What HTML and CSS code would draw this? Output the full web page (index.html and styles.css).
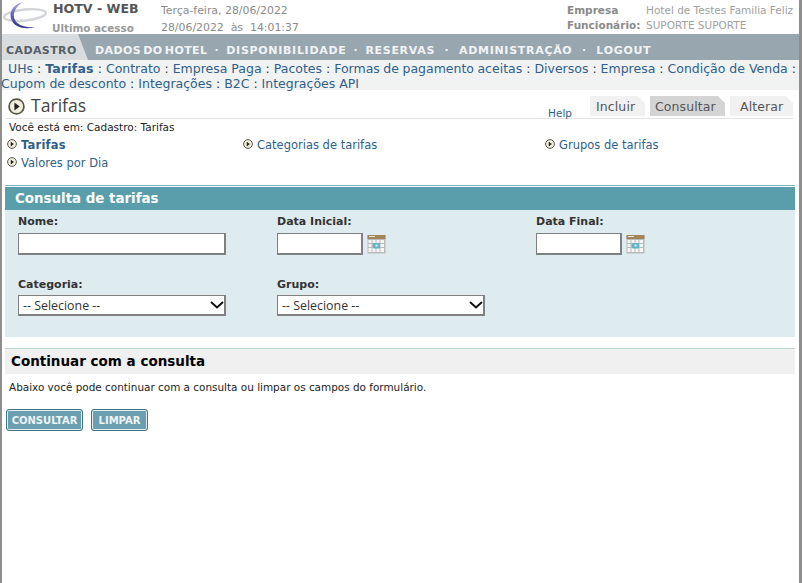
FILE: index.html
```html
<!DOCTYPE html>
<html lang="pt-BR">
<head>
<meta charset="utf-8">
<title>HOTV - WEB</title>
<link rel="stylesheet" href="styles.css">
</head>
<body>
<svg width="0" height="0" class="defs">
  <defs>
    <linearGradient id="moon" x1="0" y1="0" x2="0" y2="1">
      <stop offset="0" stop-color="#a9acd8"/>
      <stop offset=".55" stop-color="#5b5fb0"/>
      <stop offset="1" stop-color="#2f3288"/>
    </linearGradient>
    <symbol id="bullet" viewBox="0 0 16 16">
      <circle cx="8" cy="8" r="7" fill="#f2f0dc" stroke="#55554a" stroke-width="1.6"/>
      <path d="M6 4.2 11 8 6 11.8Z" fill="#222"/>
    </symbol>
    <symbol id="cal" viewBox="0 0 19 20">
      <rect x="0.5" y="1" width="18" height="18.5" fill="#b9b9b9"/>
      <rect x="0.5" y="1" width="18" height="4" fill="#a3855a"/>
      <rect x="2" y="2" width="6" height="1" fill="#efe6cf"/>
      <g fill="#f6f6f6">
        <rect x="1.5" y="6" width="3" height="3"/><rect x="5.5" y="6" width="3" height="3"/><rect x="9.5" y="6" width="3" height="3"/><rect x="13.5" y="6" width="3.5" height="3"/>
        <rect x="1.5" y="10" width="3" height="3"/><rect x="13.5" y="10" width="3.5" height="3"/>
        <rect x="1.5" y="14" width="3" height="4"/><rect x="5.5" y="14" width="3" height="4"/><rect x="9.5" y="14" width="3" height="4"/><rect x="13.5" y="14" width="3.5" height="4"/>
      </g>
      <rect x="6" y="9" width="7" height="5.5" rx="1" fill="#5fb4c8"/>
      <rect x="8.5" y="10.5" width="2" height="2" fill="#e4f3f6"/>
    </symbol>
  </defs>
</svg>
<div class="page">
  <header class="top">
    <svg class="logo" width="46" height="34" viewBox="0 0 46 34">
      <ellipse cx="23" cy="15" rx="21" ry="5.5" transform="rotate(-6 23 15)" fill="none" stroke="#d2d4d8" stroke-width="2.4"/>
      <path d="M21 2C10 5 6 13 10 21c3 6 12 9 24 6-9 1-18-1-21-7C10 14 13 7 21 2Z" fill="url(#moon)"/>
    </svg>
    <div class="top-title">
      <div class="brand">HOTV - WEB</div>
      <div class="last">Ultimo acesso</div>
    </div>
    <div class="top-date">
      <div>Terça-feira, 28/06/2022</div>
      <div>28/06/2022&nbsp; às&nbsp; 14:01:37</div>
    </div>
    <div class="top-info">
      <div class="info-row"><b>Empresa</b><span>Hotel de Testes Familia Feliz</span></div>
      <div class="info-row"><b>Funcionário:</b><span>SUPORTE SUPORTE</span></div>
    </div>
  </header>

  <nav class="nav">
    <a class="nav-active">CADASTRO</a>
    <div class="nav-items">
      <a class="nav-tight">DADOS DO HOTEL</a><i>·</i><a>DISPONIBILIDADE</a><i>·</i><a>RESERVAS</a><i class="sep-wide">·</i><a>ADMINISTRAÇÃO</a><i class="sep-wide">·</i><a>LOGOUT</a>
    </div>
  </nav>

  <div class="sub">
    <div class="sub-line first"><a>UHs</a> : <a class="on">Tarifas</a> : <a>Contrato</a> : <a>Empresa Paga</a> : <a>Pacotes</a> : <a class="tight">Formas de pagamento aceitas</a> : <a>Diversos</a> : <a>Empresa</a> : <a>Condição de Venda</a> :</div>
    <div class="sub-line second"><a>Cupom de desconto</a> : <a>Integrações</a> : <a>B2C</a> : <a>Integrações API</a></div>
  </div>

  <div class="title-row">
    <svg class="title-icon"><use href="#bullet"/></svg>
    <h1>Tarifas</h1>
    <a class="help">Help</a>
    <div class="tabs">
      <a class="tab">Incluir</a>
      <a class="tab tab-on">Consultar</a>
      <a class="tab">Alterar</a>
    </div>
  </div>

  <div class="crumb">Você está em: Cadastro: Tarifas</div>

  <div class="links">
    <a class="link on"><svg class="bullet"><use href="#bullet"/></svg>Tarifas</a>
    <a class="link"><svg class="bullet"><use href="#bullet"/></svg>Categorias de tarifas</a>
    <a class="link"><svg class="bullet"><use href="#bullet"/></svg>Grupos de tarifas</a>
    <a class="link"><svg class="bullet"><use href="#bullet"/></svg>Valores por Dia</a>
  </div>

  <section class="panel">
    <h2>Consulta de tarifas</h2>
    <div class="form">
      <div class="field">
        <label for="nome">Nome:</label>
        <input id="nome" class="txt wide" type="text">
      </div>
      <div class="field">
        <label for="di">Data Inicial:</label>
        <div class="date"><input id="di" class="txt short" type="text"><svg class="cal"><use href="#cal"/></svg></div>
      </div>
      <div class="field">
        <label for="df">Data Final:</label>
        <div class="date"><input id="df" class="txt short" type="text"><svg class="cal"><use href="#cal"/></svg></div>
      </div>
      <div class="field">
        <label for="cat">Categoria:</label>
        <div class="sel-wrap">
          <select id="cat" class="sel"><option>-- Selecione --</option></select>
          <svg class="chev" width="14" height="8" viewBox="0 0 14 8"><path d="M1 1l6 5.5L13 1" fill="none" stroke="#111" stroke-width="2"/></svg>
        </div>
      </div>
      <div class="field">
        <label for="gr">Grupo:</label>
        <div class="sel-wrap">
          <select id="gr" class="sel"><option>-- Selecione --</option></select>
          <svg class="chev" width="14" height="8" viewBox="0 0 14 8"><path d="M1 1l6 5.5L13 1" fill="none" stroke="#111" stroke-width="2"/></svg>
        </div>
      </div>
    </div>
  </section>

  <section class="cont">
    <h3>Continuar com a consulta</h3>
    <p>Abaixo você pode continuar com a consulta ou limpar os campos do formulário.</p>
    <div class="btns">
      <button class="btn btn-main" type="button">CONSULTAR</button>
      <button class="btn btn-alt" type="button">LIMPAR</button>
    </div>
  </section>
</div>
</body>
</html>
```
FILE: styles.css
```css
* { box-sizing: border-box; }
html, body { margin: 0; padding: 0; background: #fff; }
body { font-family: "DejaVu Sans", Verdana, sans-serif; font-size: 11px; color: #222; overflow: hidden; }
.defs { position: absolute; }
a { color: #2f5f8a; text-decoration: none; }

.page {
  width: 802px; height: 583px;
  border-left: 2px solid #8e8e8e;
  border-right: 3px solid #8e8e8e;
}

.top { display: flex; height: 34px; color: #8a8a8a; }
.logo { flex: none; }
.top-title { width: 109px; margin-left: 4px; }
.brand { font-weight: bold; font-size: 12.6px; color: #555; line-height: 17px; padding-left: 1px; }
.last { font-weight: bold; font-size: 10.4px; color: #999; line-height: 15px; margin-top: 4px; }
.top-date { width: 406px; font-size: 10.9px; line-height: 16px; color: #8b8b8b; padding-top: 3px; }
.top-date div + div { margin-top: 1px; }
.top-info { font-size: 10.5px; padding-top: 3px; }
.info-row { display: flex; line-height: 15px; }
.info-row b { width: 79px; color: #8a8a8a; }
.info-row span { color: #a0a0a0; white-space: nowrap; }

.nav { display: flex; height: 26px; background: #98a6b0; font-weight: bold; font-size: 11px; letter-spacing: .7px; }
.nav-active {
  width: 86px; height: 26px; padding: 10px 0 0 4px; color: #555f66;
  background: #d9dcde; line-height: 14px; letter-spacing: .4px;
  clip-path: polygon(0 0, 76px 0, 100% 100%, 0 100%);
}
.nav-items { display: flex; gap: 7px; padding: 10px 0 0 7px; line-height: 14px; }
.nav-items a { color: #f1f4f5; }
.nav-items .nav-tight { letter-spacing: .4px; word-spacing: -2px; }
.nav-items i { color: #f1f4f5; font-style: normal; }
.nav-items .sep-wide { margin: 0 2.5px; }

.sub { height: 30px; background: #f1f3f3; font-size: 12.5px; line-height: 15px; color: #333; padding-top: 1px; }
.sub-line { white-space: nowrap; }
.sub-line.first { padding-left: 6px; }
.sub-line.second { margin-left: -1px; }
.tight { word-spacing: -.5px; }
.on { font-weight: bold; color: #2f5f8a; letter-spacing: .2px; }

.title-row { display: flex; align-items: flex-end; height: 29px; margin: 0 6px 0 4px; border-bottom: 1px solid #e2e4e4; }
.title-icon { width: 17px; height: 17px; margin: 0 6px 3px 2px; flex: none; }
h1 { margin: 0; font-family: "Open Sans", sans-serif; font-weight: 400; font-size: 17.6px; line-height: 26px; color: #444; }
.help { margin: 0 0 -2px auto; font-size: 10.5px; line-height: 14px; }
.tabs { display: flex; gap: 5px; margin: 0 0 2px 18px; }
.tab {
  height: 20px; padding: 0 0 0 6px; font-size: 12.5px; line-height: 21px; color: #555;
  background: #f1f1f1; width: 55px; letter-spacing: .1px;
  clip-path: polygon(0 0, calc(100% - 7px) 0, 100% 7px, 100% 100%, 0 100%);
}
.tab + .tab { width: 75px; padding-left: 5px; }
.tab + .tab + .tab { width: 63px; padding-left: 10px; }
.tab-on { background: #d4d4d4; }

.crumb { font-size: 10.5px; line-height: 14px; padding: 1px 0 0 7px; color: #222; }
.links { display: grid; grid-template-columns: 236px 302px 1fr; grid-auto-rows: 18px; padding: 2px 0 0 5px; font-size: 11.5px; line-height: 18px; }
.link { display: flex; align-items: center; white-space: nowrap; }
.bullet { width: 10px; height: 10px; margin: -2px 4px 0 0; flex: none; }

.panel { margin: 13px 4px 0 3px; border-top: 1px solid #7fb5c0; padding-top: 1px; }
.panel h2 { margin: 0; background: #5a9eab; color: #fff; font-size: 13.4px; font-weight: bold; line-height: 23px; padding-left: 10px; }
.form { background: #dfecef; height: 127px; padding: 4px 0 0 13px; display: grid; grid-template-columns: 259px 259px 1fr; grid-template-rows: 46px 1fr; row-gap: 17px; }
.field label { display: block; font-weight: bold; font-size: 11px; line-height: 16px; color: #333; margin-bottom: 3px; }
.txt { display: block; height: 22px; border-style: solid; border-color: #808080; border-width: 1px 2px 2px 1px; background: #fff; padding: 0 2px; margin: 0; }
.wide { width: 208px; }
.short { width: 86px; }
.date { display: flex; align-items: flex-start; gap: 4px; }
.cal { width: 19px; height: 20px; margin-top: 1px; }
.sel-wrap { position: relative; width: 208px; margin-top: -1px; }
.sel {
  display: block; width: 208px; height: 21px; margin: 0; background: #fff; padding: 0 0 0 4px; appearance: none;
  border: 2px solid #808080; border-width: 1px 2px 2px 1px; font-family: "Open Sans", sans-serif; font-size: 12.4px; color: #333; border-radius: 0;
}
.chev { position: absolute; right: 2px; top: 6px; }

.cont { margin: 11px 4px 0 3px; border-top: 1px solid #bcd6d2; }
.cont h3 { margin: 0; background: #f0f0f0; font-size: 13.5px; font-weight: bold; line-height: 24px; padding: 0 0 0 6px; color: #000; height: 25px; }
.cont p { margin: 0; padding: 6px 0 0 4px; font-size: 10.45px; line-height: 14px; color: #222; }
.btns { display: flex; gap: 8px; margin-top: 15px; padding-left: 1px; }
.btn {
  height: 22px; padding: 0; font-family: inherit; font-size: 10px; font-weight: bold; color: #eef4f5;
  background: #6b9fb0; border: 1px solid #3f7487; border-radius: 3px; box-shadow: inset 0 0 0 1px #e4eef0;
}
.btn-main { width: 77px; }
.btn-alt { width: 57px; }
```
